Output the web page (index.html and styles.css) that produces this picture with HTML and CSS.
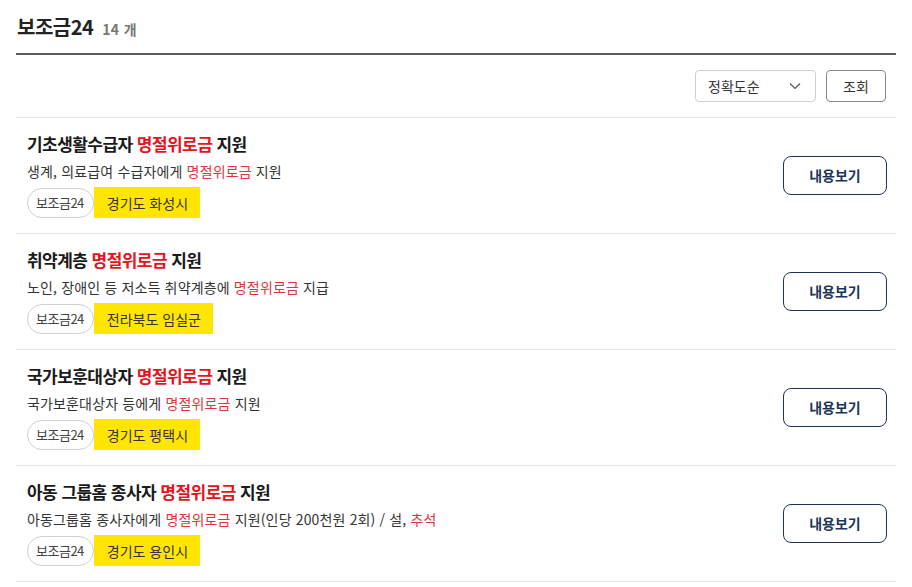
FILE: index.html
```html
<!DOCTYPE html>
<html lang="ko">
<head>
<meta charset="utf-8">
<link rel="stylesheet" href="styles.css">
</head>
<body>
<div class="wrap">
  <div class="head">
    <h2 class="title">보조금24</h2><span class="count">14 개</span>
  </div>
  <div class="toolbar">
    <div class="select">정확도순
      <svg class="chev" width="12" height="8" viewBox="0 0 12 8"><path d="M1 1.5 L6 6.5 L11 1.5" fill="none" stroke="#555" stroke-width="1.2"/></svg>
    </div>
    <button class="btn-search">조회</button>
  </div>
  <ul class="list">
    <li class="item">
      <div class="info">
        <div class="name">기초생활수급자 <em>명절위로금</em> 지원</div>
        <div class="desc">생계, 의료급여 수급자에게 <em>명절위로금</em> 지원</div>
        <div class="tags"><span class="pill">보조금24</span><span class="region">경기도 화성시</span></div>
      </div>
      <button class="view">내용보기</button>
    </li>
    <li class="item">
      <div class="info">
        <div class="name">취약계층 <em>명절위로금</em> 지원</div>
        <div class="desc">노인, 장애인 등 저소득 취약계층에 <em>명절위로금</em> 지급</div>
        <div class="tags"><span class="pill">보조금24</span><span class="region">전라북도 임실군</span></div>
      </div>
      <button class="view">내용보기</button>
    </li>
    <li class="item">
      <div class="info">
        <div class="name">국가보훈대상자 <em>명절위로금</em> 지원</div>
        <div class="desc">국가보훈대상자 등에게 <em>명절위로금</em> 지원</div>
        <div class="tags"><span class="pill">보조금24</span><span class="region">경기도 평택시</span></div>
      </div>
      <button class="view">내용보기</button>
    </li>
    <li class="item">
      <div class="info">
        <div class="name">아동 그룹홈 종사자 <em>명절위로금</em> 지원</div>
        <div class="desc">아동그룹홈 종사자에게 <em>명절위로금</em> 지원(인당 200천원 2회) / 설, <em>추석</em></div>
        <div class="tags"><span class="pill">보조금24</span><span class="region">경기도 용인시</span></div>
      </div>
      <button class="view">내용보기</button>
    </li>
  </ul>
</div>
</body>
</html>
```
FILE: styles.css
```css
* { box-sizing: border-box; }
html, body { margin: 0; padding: 0; background: #fff; }
body {
  font-family: "Noto Sans CJK KR", "Noto Sans", sans-serif;
  color: #222;
}
.wrap {
  width: 880px;
  margin-left: 16px;
}
.head {
  display: flex;
  align-items: baseline;
  height: 55px;
  padding-top: 12px;
  padding-left: 1px;
  border-bottom: 2px solid #5a5a5a;
}
.title {
  margin: 0;
  font-size: 20px;
  font-weight: 700;
  line-height: 30px;
  letter-spacing: -0.5px;
  color: #222;
}
.count {
  margin-left: 9px;
  font-size: 14px;
  font-weight: 700;
  color: #777;
  letter-spacing: 0.3px;
}
.toolbar {
  display: flex;
  justify-content: flex-end;
  gap: 10px;
  padding: 15px 10px 15px 0;
  border-bottom: 1px solid #e4e4e4;
}
.select {
  width: 121px;
  height: 32px;
  border: 1px solid #cfcfcf;
  border-radius: 4px;
  display: flex;
  align-items: center;
  justify-content: space-between;
  padding: 0 14px 0 12px;
  font-size: 14px;
  color: #333;
}
.chev { display: block; }
.btn-search {
  width: 60px;
  height: 32px;
  border: 1px solid #8a8a8a;
  border-radius: 4px;
  background: #fff;
  font-family: inherit;
  font-size: 14px;
  color: #333;
  padding: 0;
}
.list { list-style: none; margin: 0; padding: 0; }
.item {
  display: flex;
  align-items: center;
  justify-content: space-between;
  padding: 14px 9px 15px 11px;
  border-bottom: 1px solid #e4e4e4;
}
.name {
  font-size: 17px;
  font-weight: 700;
  line-height: 24px;
  color: #1a1a1a;
  letter-spacing: -0.55px;
}
.name em { font-style: normal; color: #e3141c; }
.desc {
  margin-top: 4px;
  font-size: 14px;
  line-height: 23px;
  color: #333;
  letter-spacing: 0.15px;
}
.desc em { font-style: normal; color: #e0343b; }
.tags {
  margin-top: 4px;
  display: flex;
  align-items: center;
  height: 31px;
}
.pill {
  height: 30px;
  display: inline-flex;
  align-items: center;
  padding: 0 9px 0 8px;
  border: 1px solid #cfcfcf;
  border-radius: 15px;
  font-size: 13px;
  color: #444;
  letter-spacing: -0.5px;
}
.region {
  height: 31px;
  display: inline-flex;
  align-items: center;
  padding: 0 12px 0 13px;
  background: #ffe500;
  font-size: 14px;
  color: #333;
  letter-spacing: 0;
}
.view {
  width: 104px;
  height: 39px;
  border: 1.5px solid #1c3556;
  border-radius: 8px;
  background: #fff;
  font-family: inherit;
  font-size: 14px;
  font-weight: 700;
  color: #1c3556;
  padding: 0;
}
```
